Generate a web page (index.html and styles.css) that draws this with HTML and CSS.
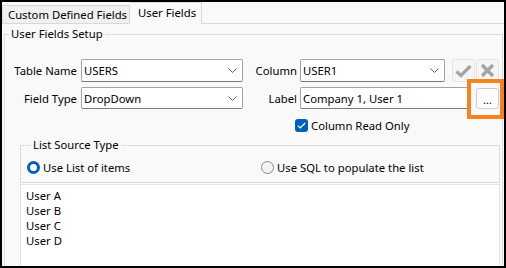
FILE: index.html
```html
<!DOCTYPE html>
<html lang="en">
<head>
  <meta charset="UTF-8">
  <title>User Fields</title>
  <link rel="stylesheet" href="styles.css">
</head>
<body>

  <div class="frame">
    <div class="tabs">
      <div class="tab">Custom Defined Fields</div>
      <div class="tab active">User Fields</div>
    </div>

    <fieldset class="group setup">
      <legend>User Fields Setup</legend>

      <div class="row row-first">
        <label class="lbl lbl-left">Table Name</label>
        <div class="combo combo-left">
          <span>USERS</span>
          <svg class="chevron" width="9" height="5" viewBox="0 0 9 5"><path d="M0.5 0.5 L4.5 4.5 L8.5 0.5" fill="none" stroke="#606060" stroke-width="1"/></svg>
        </div>
        <label class="lbl lbl-right">Column</label>
        <div class="combo combo-right">
          <span>USER1</span>
          <svg class="chevron" width="9" height="5" viewBox="0 0 9 5"><path d="M0.5 0.5 L4.5 4.5 L8.5 0.5" fill="none" stroke="#606060" stroke-width="1"/></svg>
        </div>
        <button class="tool tool-ok" disabled>
          <svg width="17" height="14" viewBox="0 0 17 14"><path d="M1.5 7.5 L6 11.5 L15.5 2" fill="none" stroke="#a4a4a4" stroke-width="3.2"/></svg>
        </button>
        <button class="tool" disabled>
          <svg width="15" height="15" viewBox="0 0 15 15"><path d="M2 2 L13 13 M13 2 L2 13" fill="none" stroke="#a4a4a4" stroke-width="3.4"/></svg>
        </button>
      </div>

      <div class="row">
        <label class="lbl lbl-left">Field Type</label>
        <div class="combo combo-left">
          <span>DropDown</span>
          <svg class="chevron" width="9" height="5" viewBox="0 0 9 5"><path d="M0.5 0.5 L4.5 4.5 L8.5 0.5" fill="none" stroke="#606060" stroke-width="1"/></svg>
        </div>
        <label class="lbl lbl-right">Label</label>
        <div class="textbox">Company 1, User 1</div>
        <div class="ellipsis-wrap">
          <button class="ellipsis">...</button>
          <span class="highlight"></span>
        </div>
      </div>

      <div class="row check-row">
        <span class="checkbox">
          <svg width="9" height="7" viewBox="0 0 9 7"><path d="M0.8 3.6 L3.2 6 L8.2 1" fill="none" stroke="#ffffff" stroke-width="1.2"/></svg>
        </span>
        <span>Column Read Only</span>
      </div>

      <fieldset class="group source">
        <legend>List Source Type</legend>
        <div class="radios">
          <label class="radio radio-on"><span class="dot"></span>Use List of items</label>
          <label class="radio radio-sql"><span class="dot"></span>Use SQL to populate the list</label>
        </div>
      </fieldset>

      <div class="listbox">
        <div>User A</div>
        <div>User B</div>
        <div>User C</div>
        <div>User D</div>
      </div>
    </fieldset>
  </div>

</body>
</html>
```

FILE: styles.css
```css
body, html {
  margin: 0;
  padding: 0;
  font-family: 'Noto Sans', 'Open Sans', sans-serif;
  font-size: 11.3px;
  color: #000;
  background-color: #f9f9f9;
}

.frame {
  width: 506px;
  height: 268px;
  box-sizing: border-box;
  border: 2px solid #000;
  background-color: #f9f9f9;
  overflow: hidden;
}

/* tab strip */
.tabs {
  display: flex;
  align-items: flex-start;
  height: 22px;
  box-sizing: border-box;
  border-bottom: 1px solid #d9d9d9;
}

.tab {
  box-sizing: border-box;
  height: 18px;
  margin-top: 3px;
  width: 128px;
  padding-left: 5px;
  line-height: 17px;
  background-color: #f0f0f0;
  border: 1px solid #d9d9d9;
  border-bottom: none;
  white-space: nowrap;
}

.tab.active {
  height: 22px;
  margin-top: 0;
  width: 72px;
  padding-left: 8px;
  line-height: 19px;
  background-color: #f9f9f9;
  border-left: none;
  position: relative;
  z-index: 1;
}

/* group boxes */
.group {
  border: 1px solid #dcdcdc;
  margin: 0;
  padding: 0;
  min-width: 0;
}

.group legend {
  padding: 0 2px;
  margin-left: 4px;
  line-height: 16px;
}

.setup {
  margin: 2px 1px 0 2px;
  height: 300px;
}

.row {
  display: flex;
  align-items: center;
  height: 22px;
  margin-top: 5px;
}

.row-first {
  margin-top: 17px;
  height: 23px;
}

.lbl {
  text-align: right;
  white-space: nowrap;
  flex: none;
}

.lbl-left {
  width: 72px;
  margin-right: 4px;
}

.lbl-right {
  width: 54px;
  margin-right: 3px;
}

.combo, .textbox {
  box-sizing: border-box;
  height: 100%;
  display: flex;
  align-items: center;
  padding-left: 2px;
  background-color: #fff;
  border: 1px solid #a3a3a3;
  border-bottom-color: #7a7a7a;
  border-radius: 2px;
  white-space: nowrap;
  flex: none;
}

.combo span {
  flex: 1;
}

.chevron {
  margin-right: 5px;
}

.combo-left {
  width: 162px;
}

.combo-right {
  width: 145px;
  margin-right: 7px;
}

.textbox {
  width: 170px;
}

.tool {
  box-sizing: border-box;
  width: 23px;
  height: 23px;
  margin: 0 1px 0 0;
  padding: 0;
  display: flex;
  align-items: center;
  justify-content: center;
  background-color: #f6f6f6;
  border: 1px solid #e6e6e6;
  border-radius: 3px;
}

/* ellipsis button with the orange callout box */
.ellipsis-wrap {
  position: relative;
  margin-left: 6px;
  width: 23px;
  height: 21px;
}

.ellipsis {
  box-sizing: border-box;
  width: 23px;
  height: 21px;
  margin: 0;
  padding: 0 0 3px 0;
  font-family: 'Noto Sans', sans-serif;
  font-size: 11px;
  line-height: 1;
  display: flex;
  align-items: flex-end;
  justify-content: center;
  color: #000;
  background-color: #fdfdfd;
  border: 1px solid #cdcdcd;
  border-radius: 3px;
}

.highlight {
  position: absolute;
  left: -9px;
  top: -9px;
  width: 37px;
  height: 40px;
  box-sizing: border-box;
  border: 4px solid #f7821f;
}

.check-row {
  height: 14px;
  margin-top: 9px;
  padding-left: 290px;
}

.checkbox {
  box-sizing: border-box;
  width: 13px;
  height: 13px;
  margin-right: 3px;
  display: flex;
  align-items: center;
  justify-content: center;
  background-color: #005fb8;
  border-radius: 3px;
}

/* list source */
.source {
  margin: 5px 2px 0 15px;
  padding: 7px 0 8px 6px;
}

.source legend {
  margin-left: 4px;
}

.radios {
  display: flex;
  height: 14px;
  align-items: center;
}

.radio {
  display: flex;
  align-items: center;
  white-space: nowrap;
}

.radio-on {
  width: 234px;
}

.dot {
  box-sizing: border-box;
  width: 13px;
  height: 13px;
  margin-right: 3px;
  border-radius: 50%;
  border: 1px solid #8a8a8a;
  background-color: #f3f3f3;
}

.radio-on .dot {
  border: 3.5px solid #005fb8;
  background-color: #fff;
}

.listbox {
  margin: 1px 2px 0 15px;
  height: 120px;
  padding: 3px 5px;
  line-height: 15px;
  background-color: #fff;
  border: 1px solid #e3e3e3;
}
```
